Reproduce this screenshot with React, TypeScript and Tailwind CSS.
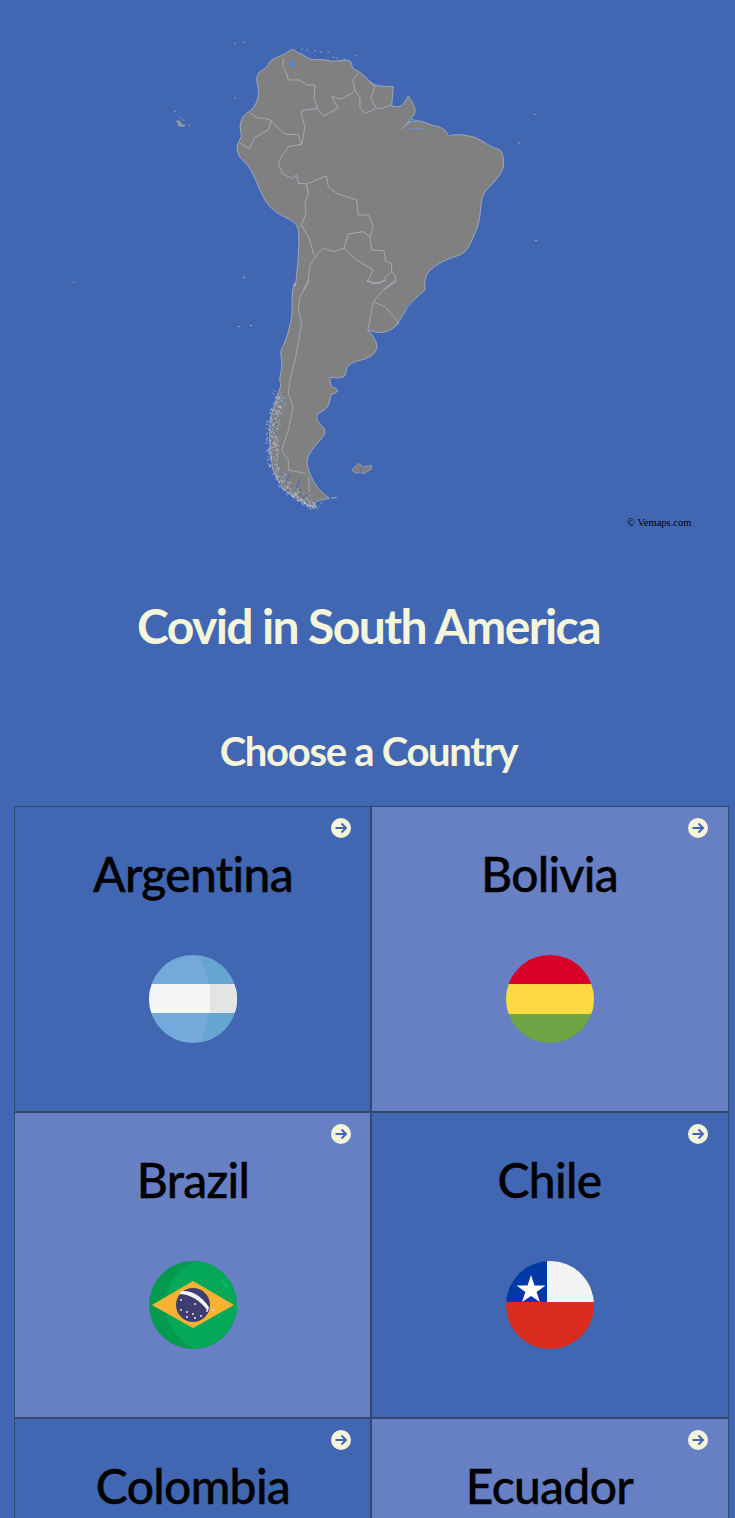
import type { ReactNode } from 'react';

type Pt = [number, number];

// coast traced in three runs against the enlarged crops of the map
const northEast: Pt[] = [
  [398, 55], [412, 68], [424, 70], [450, 90], [490, 88], [520, 95], [545, 90], [575, 92], [575, 115], [600, 125], [625, 150], [645, 168], [700, 170], [700, 170], [695, 228], [695, 228], [725, 232], [745, 197], [745, 197], [770, 240], [755, 265], [725, 297], [725, 297], [755, 270], [795, 275], [805, 283], [855, 295], [865, 322], [880, 312], [945, 318], [1000, 355], [1025, 358], [1033, 400], [1025, 430], [990, 470], [965, 495], [960, 570], [945, 610], [925, 655], [905, 675], [850, 690], [795, 730], [795, 780],
];
const south: Pt[] = [
  [585, 30], [545, 65], [520, 100], [500, 140], [460, 162], [412, 150], [412, 150], [432, 170], [445, 205], [420, 235], [350, 250], [348, 295], [300, 292], [300, 292], [302, 320], [312, 322], [326, 330], [315, 342], [303, 340], [295, 385], [262, 400], [258, 420], [285, 445], [285, 465], [240, 515], [228, 545], [240, 585], [262, 625], [298, 655], [298, 655], [250, 665], [262, 685], [262, 685], [210, 665], [160, 630], [125, 570], [120, 500], [118, 435], [130, 385], [140, 350], [155, 315], [147, 300], [158, 260], [150, 210], [165, 190], [188, 110], [185, 40], [195, 0],
];
const west: Pt[] = [
  [405, 780], [415, 690], [418, 592], [395, 570], [350, 550], [315, 515], [290, 455], [265, 405], [235, 380], [228, 345], [248, 320], [237, 290], [250, 255], [270, 245], [290, 220], [298, 185], [288, 150], [295, 125], [320, 115], [330, 90], [370, 75],
];

const smooth = (pts: Pt[]) => {
  const mid = (a: Pt, b: Pt): Pt => [(a[0] + b[0]) / 2, (a[1] + b[1]) / 2];
  const start = mid(pts[pts.length - 1], pts[0]);
  let d = `M${start[0].toFixed(1)} ${start[1].toFixed(1)}`;
  pts.forEach((p, i) => {
    const m = mid(p, pts[(i + 1) % pts.length]);
    d += ` Q${p[0].toFixed(1)} ${p[1].toFixed(1)} ${m[0].toFixed(1)} ${m[1].toFixed(1)}`;
  });
  return d + ' Z';
};

const coast = smooth([
  ...northEast.map(([x, y]): Pt => [160 + x / 3, 30 + y / 3]),
  ...south.map(([x, y]): Pt => [230 + x / 3, 280 + y / 3]),
  ...west.map(([x, y]): Pt => [160 + x / 3, 30 + y / 3]),
]);

const northBorders = [
  'M370 85 L368 110 L380 130 L385 150 L420 150 L440 165 L465 165 L462 205 L472 235 L425 242 L425 260 L435 290 L425 343 L415 315 L375 312 L350 290 L335 272 L315 265 L295 265 L270 248',
  'M335 272 L325 300 L285 322 L268 355 L240 340',
  'M472 235 L490 258 L535 235 L515 200 L545 207 L575 190 L585 180 L578 150 L595 128',
  'M585 180 L600 205 L600 235 L615 250 L650 235 L665 235 L695 225',
  'M628 155 L645 170 L632 205 L650 235',
  'M425 343 L385 350 L365 380 L355 400 L368 432 L395 445 L410 435 L415 460 L440 462 L445 490 L435 520 L438 550 L425 585 L418 592',
  'M440 462 L500 438 L505 470 L530 490 L590 510 L595 555 L625 555 L640 590 L630 620 L610 605 L565 612 L552 655 L520 665 L490 655 L470 675 L450 705 L445 750 L430 780',
  'M425 585 L445 620 L462 675',
  'M552 655 L590 690 L640 720 L622 755 L660 760 L695 725 L705 735 L708 755 L670 780',
  'M630 620 L635 660 L672 662 L678 695 L695 700 L695 725',
];

const southBorders = [
  'M240 0 L210 50 L205 90 L215 130 L205 190 L195 240 L180 300 L175 340 L190 380 L175 450 L155 510 L175 540 L175 570 L225 580',
  'M236 590 L238 650',
  'M495 0 L450 40 L430 65 L415 145',
  'M430 65 L465 80 L500 120 L505 135',
  'M410 0 L430 12 L470 0',
];

const fjordLine: Pt[] = [
  [150, 345], [138, 390], [128, 440], [126, 500], [134, 560], [166, 618], [212, 658], [258, 684],
];

// small broken coast pieces down the Chilean fjords
const fjords: string[] = [];
let seed = 7;
const rand = () => {
  seed = (seed * 16807) % 2147483647;
  return seed / 2147483647;
};
for (let i = 0; i < fjordLine.length - 1; i++) {
  const [x1, y1] = fjordLine[i];
  const [x2, y2] = fjordLine[i + 1];
  for (let k = 0; k < 60; k++) {
    const t = rand();
    const x = x1 + (x2 - x1) * t + (rand() - 0.5) * 34;
    const y = y1 + (y2 - y1) * t + (rand() - 0.5) * 24;
    fjords.push(`M${x.toFixed(1)} ${y.toFixed(1)} l${((rand() - 0.5) * 14).toFixed(1)} ${((rand() - 0.5) * 14).toFixed(1)}`);
  }
}

const islandDots = [
  [223, 38], [250, 35], [424, 55], [440, 58], [462, 60], [480, 65], [503, 65], [518, 80], [530, 82], [550, 85], [585, 75], [223, 202], [42, 242], [1075, 337], [250, 740], [48, 272], [60, 262], [68, 268], [86, 284],
];

function SouthAmericaMap() {
  return (
    <svg viewBox="0 0 735 560" className="block w-full h-[560px]">
      <g fill="#8f97a8" transform="translate(160 30) scale(0.3333)">
        <path d="M50 270 L62 274 L68 284 L80 283 L72 291 L54 289 Z" />
        {islandDots.map(([x, y]) => (
          <rect key={`${x}-${y}`} x={x} y={y} width="5" height="4" />
        ))}
      </g>
      <rect x="73" y="282" width="1.5" height="1" fill="#a0a8bb" />
      <rect x="243" y="277" width="2" height="1" fill="#a0a8bb" />
      <rect x="238" y="326" width="2" height="1" fill="#a0a8bb" />
      <rect x="250" y="325" width="2" height="1" fill="#a0a8bb" />
      <rect x="534" y="114" width="1.5" height="1" fill="#a0a8bb" />
      <rect x="535" y="240" width="2" height="1" fill="#a0a8bb" />

      <path d={coast} fill="#808080" stroke="#b4bbcb" strokeWidth="0.7" strokeLinejoin="round" />

      <g fill="none" stroke="#adb4c5" strokeWidth="2.4" strokeLinejoin="round" transform="translate(160 30) scale(0.3333)">
        {northBorders.map((d) => (
          <path key={d} d={d} />
        ))}
        {/* Maracaibo and the Amazon mouth */}
        <path d="M390 90 L388 104 L397 114 L406 104 L398 92 Z" fill="#4f86c6" stroke="none" />
        <path d="M728 296 L755 268 L795 277 M750 295 L790 297" stroke="#6f93cf" strokeWidth="3" />
      </g>
      <g fill="none" stroke="#adb4c5" strokeWidth="2.2" strokeLinejoin="round" transform="translate(230 280) scale(0.3333)">
        {southBorders.map((d) => (
          <path key={d} d={d} />
        ))}
        {/* Lagoa dos Patos */}
        <path d="M522 104 L538 72 L548 66" stroke="#4f86c6" strokeWidth="4" />
        <path d="M365 570 L385 550 L400 560 L425 556 L424 568 L400 582 L392 576 L378 580 Z" fill="#808080" stroke="#b4bbcb" strokeWidth="1.500" />
        <path d="M395 562 L392 576" stroke="#4267b2" strokeWidth="2.500" />
        <path d="M303 655 L320 652" stroke="#a9b0c2" strokeWidth="3" />
        <path d="M210 598 L200 625 L215 632 M180 585 L165 610 M240 640 L215 655" stroke="#4267b2" strokeWidth="3" />
        {fjords.map((d, i) => (
          <path key={i} d={d} stroke={i % 4 === 0 ? '#4267b2' : '#c4cad8'} strokeWidth="2" />
        ))}
      </g>
      <text x="627" y="526" fontFamily="'Liberation Serif', serif" fontSize="10.500" fill="#000">
        © Vemaps.com
      </text>
    </svg>
  );
}

function ArgentinaFlag() {
  return (
    <svg viewBox="0 0 88 88" className="w-[88px] h-[88px]">
      <defs>
        <clipPath id="arg">
          <circle cx="44" cy="44" r="44" />
        </clipPath>
      </defs>
      <g clipPath="url(#arg)">
        <rect width="88" height="88" fill="#75a9db" />
        <path d="M50 0 Q70 40 52 88 L88 88 L88 0 Z" fill="#66a4d1" />
        <rect y="29" width="88" height="29" fill="#f4f5f7" />
        <rect x="61" y="29" width="27" height="29" fill="#e4e4e4" />
      </g>
    </svg>
  );
}

function BoliviaFlag() {
  return (
    <svg viewBox="0 0 88 88" className="w-[88px] h-[88px]">
      <defs>
        <clipPath id="bol">
          <circle cx="44" cy="44" r="44" />
        </clipPath>
      </defs>
      <g clipPath="url(#bol)">
        <rect width="88" height="29" fill="#d80027" />
        <rect y="29" width="88" height="30" fill="#ffda44" />
        <rect y="59" width="88" height="29" fill="#6da544" />
      </g>
    </svg>
  );
}

function BrazilFlag() {
  const stars = [[32, 39], [46, 43], [32, 49], [38, 51], [44, 53], [52, 55], [58, 50], [64, 49], [38, 56], [46, 57]];
  return (
    <svg viewBox="0 0 88 88" className="w-[88px] h-[88px]">
      <defs>
        <clipPath id="bra">
          <circle cx="44" cy="44" r="44" />
        </clipPath>
      </defs>
      <g clipPath="url(#bra)">
        <rect width="88" height="88" fill="#069a50" />
        <path d="M47 0 A44 44 0 0 1 47 88 A47 47 0 0 1 47 0 Z" fill="#05a857" />
        <path d="M3 44 L44 20 L85 44 L44 67 Z" fill="#f9b233" />
        <circle cx="44" cy="44" r="17" fill="#3e3d6f" />
        <path d="M30 33 Q46 33 59 50 L60 46 Q48 29 33 30 Z" fill="#f4f5f7" />
        {stars.map(([x, y]) => (
          <circle key={`${x}-${y}`} cx={x} cy={y} r="1" fill="#e8e8f0" />
        ))}
        <circle cx="74" cy="20" r="2" fill="#0fb564" />
        <circle cx="77" cy="24" r="2.500" fill="#0fb564" />
      </g>
    </svg>
  );
}

function ChileFlag() {
  return (
    <svg viewBox="0 0 88 88" className="w-[88px] h-[88px]">
      <defs>
        <clipPath id="chi">
          <circle cx="44" cy="44" r="44" />
        </clipPath>
      </defs>
      <g clipPath="url(#chi)">
        <rect y="41" width="88" height="47" fill="#d92c1e" />
        <rect width="41" height="41" fill="#0039a6" />
        <rect x="41" width="47" height="41" fill="#f3f3f3" />
        <path d="M25 14 L28.500 24.500 L39.500 24.500 L30.600 31 L34 41 L25 35 L16 41 L19.400 31 L10.500 24.500 L21.500 24.500 Z" fill="#fff" />
      </g>
    </svg>
  );
}

function ArrowBadge() {
  return (
    <svg viewBox="0 0 20 20" className="absolute top-[11px] left-[316px] w-5 h-5">
      <circle cx="10" cy="10" r="10" fill="#f5f5dc" />
      <path d="M4.500 10 H15 M10.500 5.500 L15 10 L10.500 14.500" fill="none" stroke="#4267b2" strokeWidth="2" />
    </svg>
  );
}

type CountryCardProps = {
  name: string;
  light?: boolean;
  flag?: ReactNode;
};

function CountryCard({ name, light, flag }: CountryCardProps) {
  return (
    <div className={`relative h-[306px] border border-[#35466f] ${light ? 'bg-[#6780c4]' : 'bg-[#4267b2]'}`}>
      <ArrowBadge />
      <div className="w-[356px] flex flex-col items-center">
        <h3 className="mt-[37px] text-[48px] leading-[60px] font-medium text-black tracking-[-0.7px] [-webkit-text-stroke:0.4px_black]">{name}</h3>
        <div className="mt-[51px]">{flag}</div>
      </div>
    </div>
  );
}

export default function App() {
  return (
    <div className="h-[1518px] overflow-hidden bg-[#4267b2] font-['Lato',sans-serif]">
      <SouthAmericaMap />
      <h1 className="mt-[36px] pl-[2px] text-center text-[48px] leading-[60px] font-bold text-[#f5f5dc] tracking-[-1.6px]">
        Covid in South America
      </h1>
      <h2 className="mt-[70px] pl-[2px] text-center text-[40px] leading-[50px] font-bold text-[#f5f5dc] tracking-[-1.3px]">
        Choose a Country
      </h2>
      <div className="mt-[30px] ml-[14px] w-[715px] grid grid-cols-[356.5px_358.5px]">
        <CountryCard name="Argentina" flag={<ArgentinaFlag />} />
        <CountryCard name="Bolivia" light flag={<BoliviaFlag />} />
        <CountryCard name="Brazil" light flag={<BrazilFlag />} />
        <CountryCard name="Chile" flag={<ChileFlag />} />
        <CountryCard name="Colombia" />
        <CountryCard name="Ecuador" light />
      </div>
    </div>
  );
}
